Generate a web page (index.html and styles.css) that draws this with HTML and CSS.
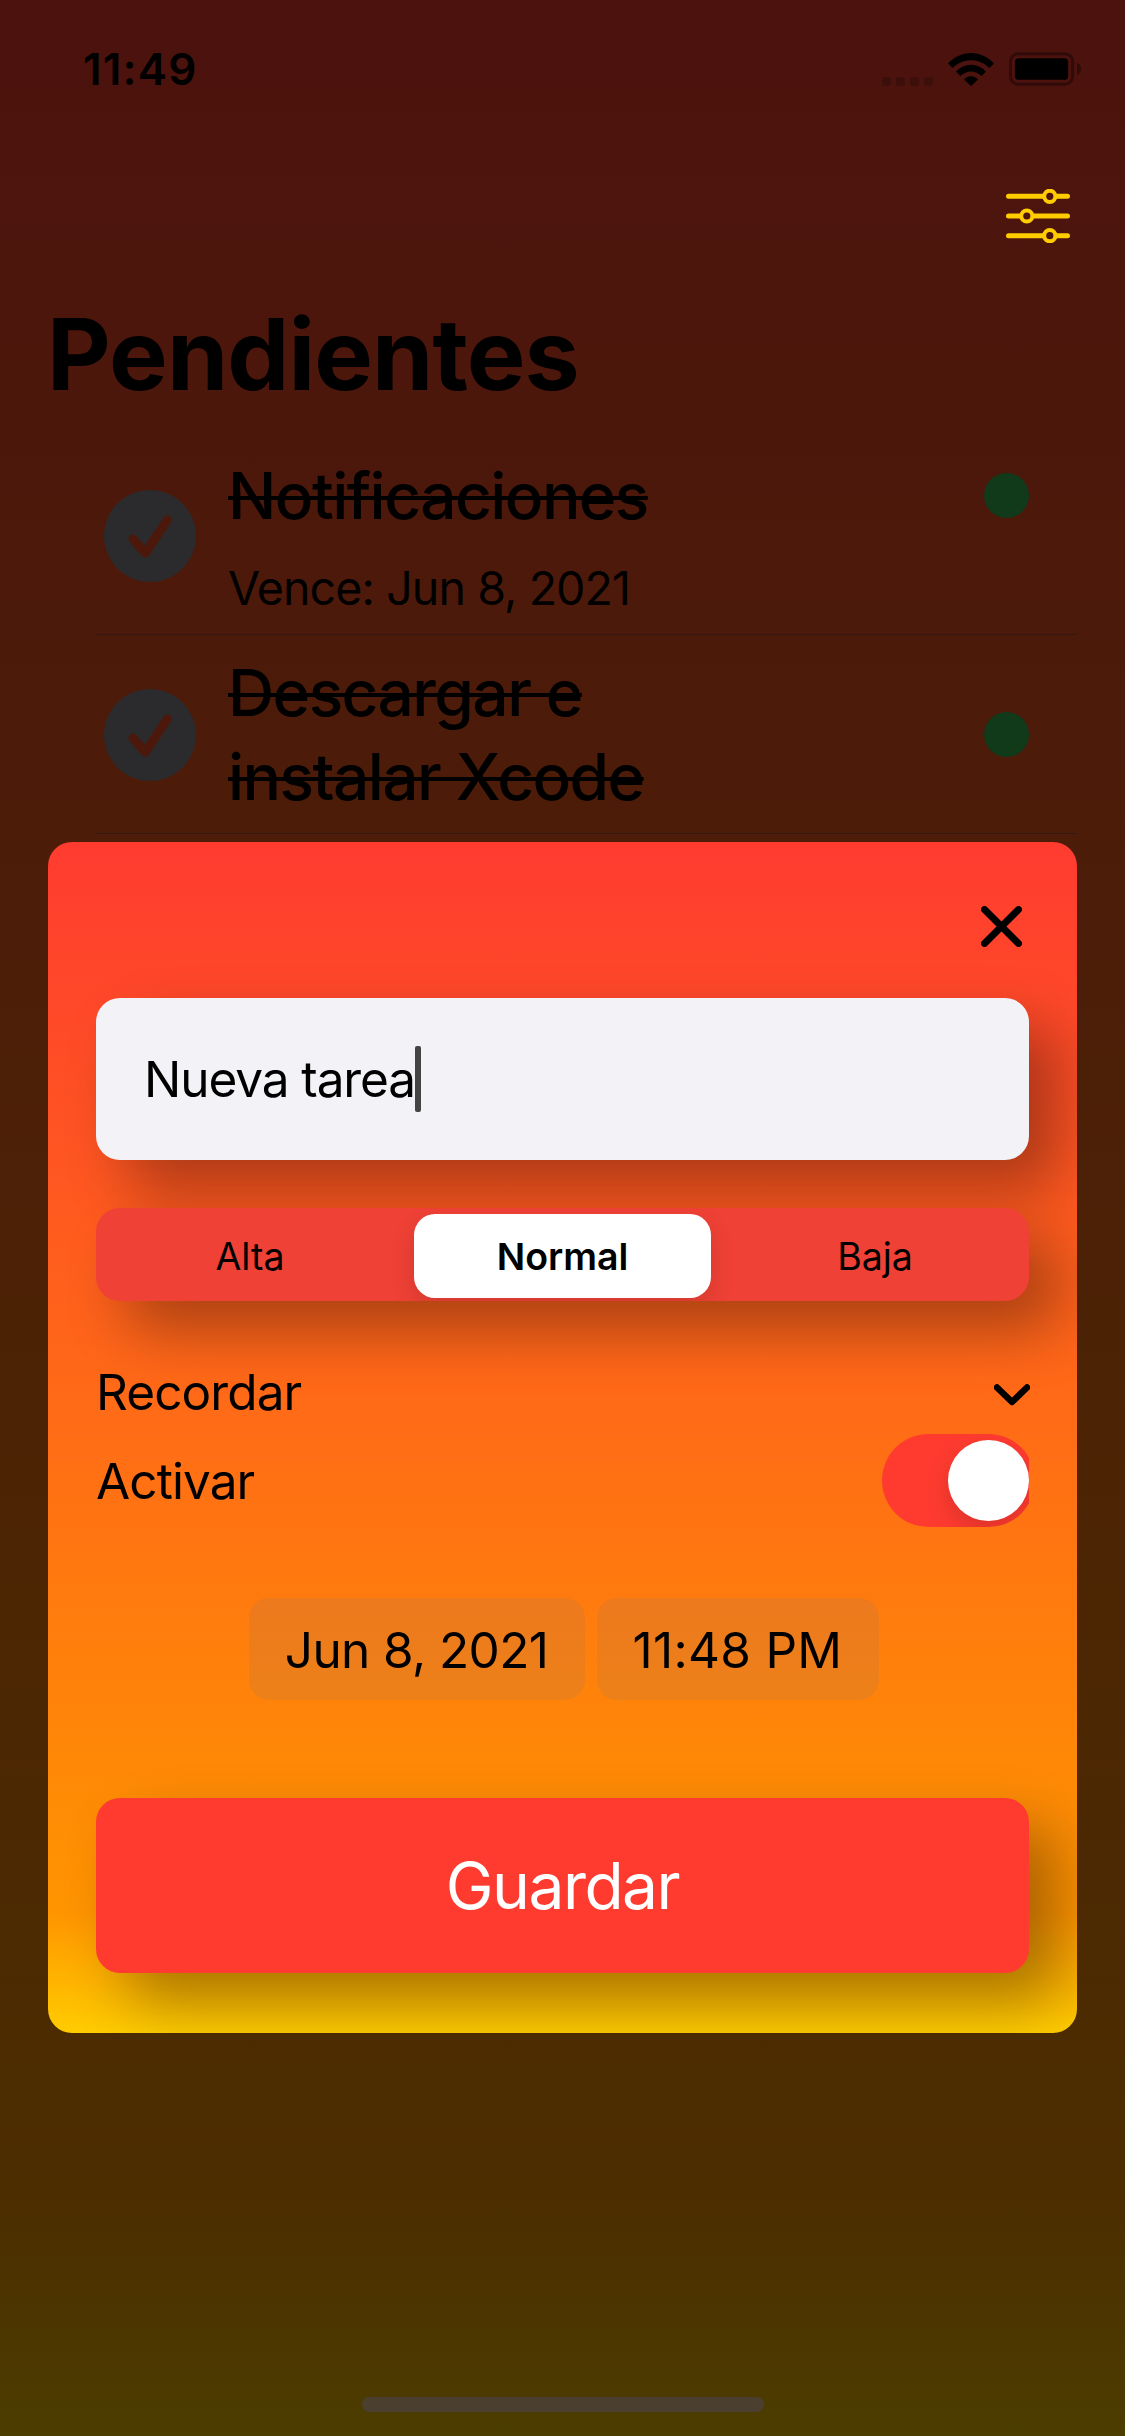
FILE: index.html
```html
<!DOCTYPE html>
<html lang="es">
<head>
<meta charset="utf-8">
<title>Pendientes</title>
<link rel="stylesheet" href="styles.css">
</head>
<body>
<div class="screen">
  <header class="status">
    <span class="clock">11:49</span>
    <div class="status-icons">
      <div class="signal"><i></i><i></i><i></i><i></i></div>
      <svg class="wifi" viewBox="0 0 46 33">
        <path d="M0 10.500C13 -3.500 33 -3.500 46 10.500L41.300 15C31 4.700 15 4.700 4.700 15Z"/>
        <path d="M8 18.500C16.500 9.500 29.500 9.500 38 18.500L33.500 23C27.500 17 18.500 17 12.500 23Z"/>
        <path d="M16 26.500C20 22.300 26 22.300 30 26.500L23 33Z"/>
      </svg>
      <svg class="battery" viewBox="0 0 74 34">
        <rect class="shell" x="1.500" y="1.500" width="63" height="31" rx="8"/>
        <rect x="6" y="6" width="54" height="22" rx="4"/>
        <path class="nub" d="M69 11C74.300 13 74.300 21 69 23Z"/>
      </svg>
    </div>
  </header>
  <nav class="toolbar">
    <svg class="sliders" viewBox="0 0 64 54">
      <path d="M2.500 7.300H37M50.500 7.300H61.500M2.500 27H14M27.500 27H61.500M2.500 46.700H37M50.500 46.700H61.500"/>
      <circle cx="43.800" cy="7.300" r="5.600"/><circle cx="20.800" cy="27" r="5.600"/><circle cx="43.800" cy="46.700" r="5.600"/>
    </svg>
  </nav>
  <h1 class="title">Pendientes</h1>
  <ul class="tasks">
    <li class="task">
      <svg class="check" viewBox="0 0 92 92"><circle cx="46" cy="46" r="46"/><path d="M29 49L41.300 63L63.300 30"/></svg>
      <div class="task-body">
        <div class="task-head"><s class="task-name">Notificaciones</s><i class="dot"></i></div>
        <div class="due">Vence: Jun 8, 2021</div>
      </div>
    </li>
    <li class="task">
      <svg class="check" viewBox="0 0 92 92"><circle cx="46" cy="46" r="46"/><path d="M29 49L41.300 63L63.300 30"/></svg>
      <div class="task-body">
        <div class="task-head"><s class="task-name">Descargar e instalar Xcode</s><i class="dot"></i></div>
      </div>
    </li>
  </ul>
  <div class="home"></div>

  <section class="sheet">
    <svg class="close" viewBox="0 0 41 41"><path d="M3.500 3.500L37.500 37.500M37.500 3.500L3.500 37.500"/></svg>
    <div class="field"><span>Nueva tarea</span><i class="caret"></i></div>
    <div class="segments">
      <span class="segment">Alta</span>
      <span class="segment selected">Normal</span>
      <span class="segment">Baja</span>
    </div>
    <div class="row recall"><span>Recordar</span><svg class="chevron" viewBox="0 0 36 22"><path d="M3 3.500L18 18L33 3.500"/></svg></div>
    <div class="row enable"><span>Activar</span><div class="toggle"><div class="track"><i class="knob"></i></div></div></div>
    <div class="pickers"><span class="picker date">Jun 8, 2021</span><span class="picker time">11:48 PM</span></div>
    <div class="save">Guardar</div>
  </section>
</div>
</body>
</html>
```
FILE: styles.css
```css
* { box-sizing: border-box; }
body { margin: 0; font-family: Inter, "Liberation Sans", sans-serif; color: #000; }
.screen {
  position: relative;
  display: flex;
  flex-direction: column;
  width: 1125px;
  height: 2436px;
  overflow: hidden;
  background: linear-gradient(#4c120e 0%, #4c2d00 90%, #4c3d00 100%);
}
.status { display: flex; align-items: center; justify-content: space-between; height: 138px; padding: 0 43px 0 83px; }
.clock { font-size: 44px; font-weight: 600; line-height: 54px; letter-spacing: 1.2px; }
.status-icons { display: flex; align-items: center; }
.signal { display: flex; gap: 5px; margin: 24px 15px 0 0; }
.signal i { width: 9px; height: 9px; border-radius: 3px; background: #3c0f0b; }
.wifi { width: 46px; height: 33px; margin-right: 15px; }
.battery { width: 73px; height: 34px; }
.shell { fill: none; stroke: #310b09; stroke-width: 3; }
.nub { fill: #310b09; }
.toolbar { display: flex; align-items: center; justify-content: flex-end; height: 156px; padding-right: 55px; }
.sliders { width: 64px; height: 54px; fill: none; stroke: #fc0; stroke-width: 5; stroke-linecap: round; }
.sliders circle { stroke-width: 4; }
.title { margin: 0; padding: 1px 0 0 47px; height: 120px; font-size: 98.500px; font-weight: 700; line-height: 120px; letter-spacing: -.9px; }
.tasks { list-style: none; margin: 22px 48px 0 96px; padding: 0; }
.task { display: flex; align-items: center; height: 199px; padding: 1px 48px 0 8px; border-bottom: 1px solid #33190f; }
.task:first-child { padding-top: 2px; }
.check { flex: none; width: 92px; height: 92px; margin-right: 32px; fill: #2b2b2d; }
.check path { fill: none; stroke: #4c180b; stroke-width: 9; stroke-linecap: round; stroke-linejoin: round; }
.task-body { flex: 1; }
.task-head { display: flex; align-items: center; justify-content: space-between; }
.task-name { width: 460px; font-size: 64px; font-weight: 500; line-height: 84px; letter-spacing: -1.570px; text-decoration-thickness: 4px; }
.dot { width: 45px; height: 45px; border-radius: 50%; background: #103a1a; }
.due { margin-top: 20px; font-size: 46.500px; line-height: 61px; letter-spacing: -.9px; }
.home { width: 402px; height: 15px; margin: auto auto 24px; border-radius: 8px; background: #4b4030; }
.sheet {
  position: absolute;
  left: 48px;
  top: 842px;
  display: flex;
  flex-direction: column;
  width: 1029px;
  height: 1191px;
  padding: 64px 48px 60px;
  border-radius: 24px;
  overflow: hidden;
  background: linear-gradient(#ff3b30 0%, #ff9500 90%, #fc0 100%);
  font-size: 49.500px;
  letter-spacing: -.9px;
}
.close { flex: none; align-self: flex-end; width: 41px; height: 41px; margin-right: 7px; fill: none; stroke: #000; stroke-width: 7; stroke-linecap: round; }
.field { display: flex; align-items: center; height: 162px; margin-top: 51px; padding-left: 48px; border-radius: 24px; background: #f2f2f7; box-shadow: 30px 30px 60px rgba(0, 0, 0, .33); letter-spacing: -1.080px; }
.caret { width: 6px; height: 66px; border-radius: 2px; background: #444; }
.segments { display: grid; grid-template-columns: 1fr 297px 1fr; gap: 10px; height: 93px; margin-top: 48px; padding: 6px 0 3px; border-radius: 24px; background: #ef4136; box-shadow: 30px 30px 60px rgba(0, 0, 0, .33); font-size: 37.500px; letter-spacing: 0; }
.segment { display: flex; align-items: center; justify-content: center; }
.selected { border-radius: 21px; background: #fff; font-weight: 600; box-shadow: 0 9px 24px rgba(0, 0, 0, .12); clip-path: inset(-6px -40px -3px); }
.row { display: flex; align-items: center; justify-content: space-between; }
.recall { height: 60px; margin-top: 61px; }
.chevron { width: 36px; height: 22px; margin: 6px -1px 0 0; fill: none; stroke: #000; stroke-width: 6.500; stroke-linecap: round; stroke-linejoin: round; }
.enable { height: 93px; margin-top: 12px; }
.toggle { width: 147px; height: 93px; overflow: hidden; }
.track { display: flex; justify-content: flex-end; width: 153px; height: 93px; padding: 6px; border-radius: 47px; background: #ff3b30; overflow: hidden; }
.knob { width: 81px; height: 81px; border-radius: 50%; background: #fff; box-shadow: 0 9px 24px rgba(0, 0, 0, .15); }
.pickers { display: flex; justify-content: center; gap: 12px; margin-top: 71px; padding-left: 2px; }
.picker { display: flex; align-items: center; justify-content: center; height: 102px; padding-top: 1px; border-radius: 20px; background: rgba(118, 118, 128, .13); }
.date { width: 336px; letter-spacing: -.6px; }
.time { width: 282px; letter-spacing: .3px; }
.save { display: flex; align-items: center; justify-content: center; height: 175px; margin-top: 98px; border-radius: 24px; background: #ff3b30; box-shadow: 30px 30px 60px rgba(0, 0, 0, .33); color: #fff; font-size: 64px; letter-spacing: -1.500px; }
```
